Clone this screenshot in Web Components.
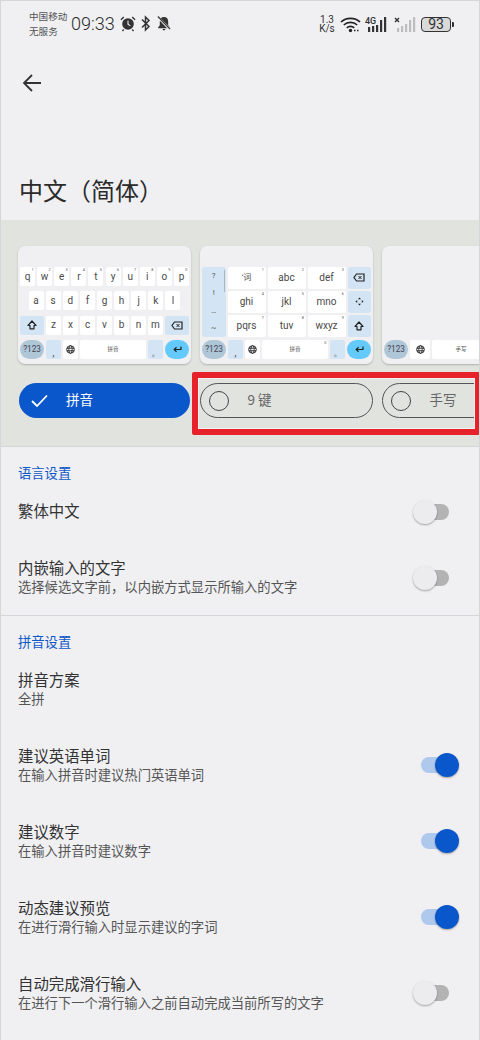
<!DOCTYPE html>
<html lang="zh"><head><meta charset="utf-8"><title>中文（简体）</title>
<style>
html,body{margin:0;padding:0;background:#f0f0f3}
body{width:480px;height:1040px;overflow:hidden;font-family:"Noto Sans CJK SC","Noto Sans",sans-serif;color:#333}
</style></head><body>
<settings-page>
  <status-bar></status-bar>
  <app-header>中文（简体）</app-header>
  <layout-banner></layout-banner>
  <group-title>语言设置</group-title>
  <setting-row h="57" label="繁体中文" toggle="off"></setting-row>
  <setting-row h="75" label="内嵌输入的文字" sub="选择候选文字前，以内嵌方式显示所输入的文字" toggle="off"></setting-row>
  <div style="height:1px;background:#d6d6da"></div>
  <group-title>拼音设置</group-title>
  <setting-row h="75" label="拼音方案" sub="全拼"></setting-row>
  <setting-row h="76" label="建议英语单词" sub="在输入拼音时建议热门英语单词" toggle="on"></setting-row>
  <setting-row h="76" label="建议数字" sub="在输入拼音时建议数字" toggle="on"></setting-row>
  <setting-row h="76" label="动态建议预览" sub="在进行滑行输入时显示建议的字词" toggle="on"></setting-row>
  <setting-row h="76" label="自动完成滑行输入" sub="在进行下一个滑行输入之前自动完成当前所写的文字" toggle="off"></setting-row>
</settings-page>
<script>
function def(name, css, html, init){
  customElements.define(name, class extends HTMLElement{
    connectedCallback(){
      if(this.shadowRoot) return;
      const r=this.attachShadow({mode:'open'});
      r.innerHTML='<style>'+css+'</style>'+(typeof html==='function'?html(this):html);
      if(init) init(this,r);
    }
  });
}
def('settings-page',
 ':host{display:block;position:relative;width:480px;height:1040px;overflow:hidden}:host::after{content:"";position:absolute;inset:0;border:1px solid #d6d6d8;border-bottom:0;pointer-events:none}',
 '<slot></slot>');

def('status-bar',
 `:host{display:flex;height:46px;box-sizing:border-box;align-items:flex-start;color:#333;font-family:Roboto,"Noto Sans CJK SC",sans-serif}
  .carrier{margin:9px 0 0 29px;width:42px;font:9.600px/15px "Noto Sans CJK SC",sans-serif;color:#555;white-space:nowrap}
  .time{font:300 18px/24px Roboto,sans-serif;margin:12px 0 0 0;width:48px;color:#2c2c2c}
  svg{display:block;flex:none}
  .ic{display:flex;margin:15px 0 0 1px}
  .right{margin-left:auto;display:flex;align-items:center;height:24px;margin-top:12px;margin-right:26px}
  .sp{font:10px/9px Roboto,sans-serif;text-align:center;width:16px;color:#333;margin-right:5px}
  .bat{box-sizing:border-box;width:30px;height:15px;border:1.300px solid #333;border-radius:4px;font:14px/13px Roboto,sans-serif;text-align:center;background:#d9d9da;color:#333}
  .nub{width:2px;height:5px;background:#333;border-radius:0 1px 1px 0;margin-left:1px}`,
 `<div class="carrier">中国移动<br>无服务</div><div class="time">09:33</div>
  <div class="ic">
   <svg width="16" height="17" viewBox="0 0 17 17"><circle cx="8.500" cy="9" r="6.200" fill="#333"/><path d="M8.500 5.500V9.300L11 11" stroke="#f0f0f3" stroke-width="1.200" fill="none"/><path d="M1 4.500 4 1.600M16 4.500 13 1.600M4 15l-1.400 1.400M13 15l1.400 1.400" stroke="#333" stroke-width="1.500"/></svg>
   <svg width="11" height="17" viewBox="0 0 11 17" style="margin-left:4px"><path d="M2 4.500 9 11.500 5.500 15V2L9 5.500 2 12.500" stroke="#333" stroke-width="1.500" fill="none"/></svg>
   <svg width="14" height="17" viewBox="0 0 15 17" style="margin-left:6px"><path d="M7.500 1.500c-3 0-4.500 2.200-4.500 5v4L1.300 12.500V13.500H13.700V12.500L12 10.500v-4c0-2.800-1.500-5-4.500-5z" fill="#333"/><path d="M6 14.500h3a1.500 1.500 0 0 1-3 0z" fill="#333"/><path d="M1 1.500 14 15" stroke="#f0f0f3" stroke-width="2.600"/><path d="M1 1 14 14.500" stroke="#333" stroke-width="1.300"/></svg>
  </div>
  <div class="right">
   <div class="sp">1.3<br>K/s</div>
   <svg width="21" height="17" viewBox="0 0 21 17" style="margin-right:4px"><g fill="none" stroke="#222" stroke-width="1.700"><path d="M1 6C6 1.200 15 1.200 20 6"/><path d="M3.800 9C7.500 5.500 13.500 5.500 17.200 9"/><path d="M6.800 11.800C8.800 10 12.200 10 14.200 11.800"/></g><circle cx="10.500" cy="14.500" r="1.700" fill="#222"/><path d="M14 14.500h1.500M17 14.500h1.500" stroke="#222" stroke-width="1.500"/></svg>
   <svg width="24" height="17" viewBox="0 0 24 17" style="margin-right:5px"><text x="0" y="7.500" font-family="Roboto" font-size="9" font-weight="500" fill="#333">4G</text><g fill="#333"><rect x="3" y="11" width="2.200" height="5"/><rect x="7" y="10" width="2.200" height="6"/><rect x="11" y="9" width="2.200" height="7"/><rect x="15" y="4" width="2.200" height="12"/><rect x="19" y="1" width="2.200" height="15"/></g></svg>
   <svg width="22" height="17" viewBox="0 0 22 17" style="margin-right:5px"><path d="M1 2 5 6M5 2 1 6" stroke="#333" stroke-width="1.400"/><g fill="#bdbdbd"><rect x="3" y="12" width="2.200" height="4"/><rect x="7" y="10" width="2.200" height="6"/><rect x="11" y="8" width="2.200" height="8"/><rect x="15" y="4" width="2.200" height="12"/><rect x="19" y="1" width="2.200" height="15"/></g></svg>
   <div class="bat">93</div><div class="nub"></div>
  </div>`);

def('app-header',
 `:host{display:block}
  .bar{height:74px;display:flex;align-items:center;padding-left:22px}
  .t{height:100px;box-sizing:border-box;display:flex;align-items:flex-end;padding:0 0 13px 19px}
  h1{margin:0;font:400 24px/34px "Noto Sans CJK SC",sans-serif;color:#2b2b2b}
  svg{display:block}`,
 `<div class="bar"><svg width="20" height="20" viewBox="0 0 20 20"><path d="M19 10H2M10 2 2 10l8 8" fill="none" stroke="#333" stroke-width="1.800"/></svg></div>
  <div class="t"><h1><slot></slot></h1></div>`);

def('key-cap',
 `:host{display:flex;position:relative;align-items:center;justify-content:center;box-sizing:border-box;height:100%;min-width:0;flex:var(--f,1 1 0);background:var(--bg,#fff);border-radius:var(--rad,2px);font:10px/1 Roboto,"Noto Sans CJK SC",sans-serif;color:#4a4a4a;overflow:hidden}
  sup{position:absolute;top:0.500px;right:1.500px;font-size:3.800px;line-height:4px;color:#555}
  svg{display:block}`,
 h=>{const s=h.getAttribute('s');return '<slot></slot>'+(s?'<sup>'+s+'</sup>':'');});

const ICONS={
 shift:'<svg width="10" height="10" viewBox="0 0 10 10"><path d="M5 1 9 5.500H7V8.800H3V5.500H1z" fill="none" stroke="#222" stroke-width="1.200" stroke-linejoin="round"/></svg>',
 del:'<svg width="12" height="9" viewBox="0 0 12 9"><path d="M3.500 1H11V8H3.500L1 4.500z" fill="none" stroke="#222" stroke-width="1.200"/><path d="M5.500 3 8.500 6M8.500 3 5.500 6" stroke="#222"/></svg>',
 globe:'<svg width="9" height="9" viewBox="0 0 9 9" fill="none" stroke="#222" stroke-width=".9"><circle cx="4.500" cy="4.500" r="3.800"/><ellipse cx="4.500" cy="4.500" rx="1.700" ry="3.800"/><path d="M.7 3.200h7.600M.7 5.800h7.600"/></svg>',
 enter:'<svg width="9" height="7" viewBox="0 0 9 7"><path d="M8 .5V3.500H1.500M3.500 1.300 1.200 3.500 3.500 5.700" fill="none" stroke="#222" stroke-width="1.200"/></svg>',
 move:'<svg width="9" height="9" viewBox="0 0 9 9" fill="#222"><path d="M4.500 .5 6 2.200H3zM4.500 8.500 6 6.800H3zM.5 4.500 2.200 3V6zM8.500 4.500 6.800 3V6z"/></svg>'
};
const BLUE='--bg:#d3e5f4;';
const NUM='--bg:#afc6d6;--rad:10px;--f:0 0 24px;color:#445;font-size:8.200px';
function k(label,o){o=o||{};
  return '<key-cap '+(o.s?'s="'+o.s+'" ':'')+'style="'+(o.st||'')+'">'+label+'</key-cap>';}
function bottom(spS){
  return '<div class="row">'+
   k('?123',{st:NUM})+comma(15)+globe(15)+
   k('<span style="font-size:5.500px;color:#555">拼音</span>',{s:spS,st:'--f:1 1 0'})+
   stop(15)+
   k(ICONS.enter,{st:'--bg:#64c9fb;--rad:10px;--f:0 0 24px'})+'</div>';
}
function comma(w){return k('<span style="align-self:flex-end;padding-bottom:1px">,</span>',{st:BLUE+'--f:0 0 '+w+'px'});}
function stop(w){return k('<span style="align-self:flex-end;font-size:7px;padding-bottom:1px">。</span>',{st:BLUE+'--f:0 0 '+w+'px'});}
function globe(w){return k(ICONS.globe,{st:'--f:0 0 '+w+'px'});}

function qwerty(){
  const r1='qwertyuiop'.split('').map((c,i)=>k(c,{s:String((i+1)%10)})).join('');
  const r2='asdfghjkl'.split('').map(c=>k(c)).join('');
  const r3='zxcvbnm'.split('').map(c=>k(c)).join('');
  return '<div class="row">'+r1+'</div><div class="row" style="padding:0 8.600px">'+r2+'</div>'+
   '<div class="row">'+k(ICONS.shift,{st:BLUE+'--f:0 0 24px'})+r3+k(ICONS.del,{st:BLUE+'--f:0 0 24px'})+'</div>'+
   bottom();
}
function nine(){
  const t=(a,b)=>k(a,{s:b});
  const side=i=>k(i,{st:BLUE+'--f:0 0 23.500px'});
  return '<div class="nine"><div class="col">'+
     ['?','!','…','~'].map(c=>'<span>'+c+'</span>').join('')+'<i></i></div>'+
    '<div class="g">'+
     '<div class="r3">'+t('<span style="font-size:8px">‘词</span>','1')+t('abc','2')+t('def','3')+side(ICONS.del)+'</div>'+
     '<div class="r3">'+t('ghi','4')+t('jkl','5')+t('mno','6')+side(ICONS.move)+'</div>'+
     '<div class="r3">'+t('pqrs','7')+t('tuv','8')+t('wxyz','9')+side(ICONS.shift)+'</div>'+
    '</div></div>'+
   bottom('0');
}
function hand(){
  return '<div style="flex:1"></div><div class="row" style="width:106px">'+
   k('?123',{st:NUM})+
   k(ICONS.globe,{st:'--f:0 0 20px'})+
   k('<span style="font-size:5.500px;color:#555">手写</span>',{st:'--f:1 1 0'})+'</div>';
}
def('kb-preview',
 `:host{display:flex;flex:0 0 173px;height:118px;box-sizing:border-box;flex-direction:column;gap:5.300px;padding:21px 2px 5px;background:#f0f0f3;border-radius:7px;box-shadow:0 1px 2px rgba(0,0,0,.22)}
  :host([type=hand]){gap:0}
  .row{display:flex;gap:2.100px;height:19px;flex:none}
  .nine{display:flex;gap:2px;height:70px;flex:none;margin-bottom:-2.300px}
  .col{position:relative;flex:0 0 23.500px;background:#d3e5f4;border-radius:2px;display:flex;flex-direction:column;justify-content:space-around;align-items:center;font:8px/1 Roboto,sans-serif;color:#555}
  .col i{position:absolute;right:1px;top:3px;width:1px;height:22px;background:#a9b6c0}
  .g{flex:1;display:flex;flex-direction:column;gap:2.400px}
  .r3{flex:1;display:flex;gap:2px}`,
 h=>{const t=h.getAttribute('type');return t==='q'?qwerty():t==='nine'?nine():hand();});

def('layout-chip',
 `:host{display:flex;flex:0 0 173px;box-sizing:border-box;height:35px;border-radius:18px;align-items:center;border:1.500px solid #555;color:#666;font:13.500px/1 "Noto Sans CJK SC",Roboto,sans-serif;white-space:nowrap}
  :host([sel]){background:#0a57cc;border:0;color:#fff;flex-basis:171px;margin:0 1px}
  .c{box-sizing:border-box;width:20px;height:20px;border:1.300px solid #444;border-radius:50%;margin:0 0 0 7.500px}
  svg{display:block;margin-left:12px}
  .l{margin-left:19px;padding-bottom:1px}
  :host([sel]) .l{margin-left:18px;color:#fff}`,
 h=>(h.hasAttribute('sel')?'<svg width="17" height="13" viewBox="0 0 17 13"><path d="M1 7l5 5L16 1.500" fill="none" stroke="#fff" stroke-width="1.800"/></svg>':'<div class="c"></div>')+'<span class="l"><slot></slot></span>');

def('layout-banner',
 `:host{display:block;position:relative;height:227px;box-sizing:border-box;background:#e1e3df;border-bottom:1px solid #d6d6da;overflow:hidden}
  .rows{display:flex;flex-direction:column;width:800px;padding:26px 0 0 18px}
  .line{display:flex;gap:9px}
  .chips{margin-top:19px}
  .mark{position:absolute;left:192px;top:152px;width:288px;height:63px;box-sizing:border-box;border:6.500px solid #e8222b;border-right-width:5px;border-radius:2px;box-shadow:inset 0 0 0 1px #f2f2f2}`,
 `<div class="rows"><div class="line">
    <kb-preview type="q"></kb-preview><kb-preview type="nine"></kb-preview><kb-preview type="hand"></kb-preview>
  </div>
  <div class="line chips">
    <layout-chip sel>拼音</layout-chip><layout-chip>9 键</layout-chip><layout-chip>手写</layout-chip>
  </div></div><div class="mark"></div>`);

def('group-title',
 `:host{display:block;padding:17px 0 1px 18px;font:13.300px/18px "Noto Sans CJK SC",sans-serif;color:#0d57c6}`,
 '<slot></slot>');

def('toggle-switch',
 `:host{display:block;position:relative;width:40px;height:24px;flex:none}
  .track{position:absolute;top:4px;height:16px;border-radius:8px}
  .thumb{position:absolute;top:0;width:24px;height:24px;border-radius:50%;box-shadow:0 1px 2px rgba(0,0,0,.32)}
  :host([state=off]) .track{left:7px;width:29px;background:#b3b3b3}
  :host([state=off]) .thumb{left:0;background:#ececee}
  :host([state=on]) .track{left:4px;width:28px;background:#aec9ec}
  :host([state=on]) .thumb{left:18px;background:#0a57cc}`,
 '<div class="track"></div><div class="thumb"></div>');

def('setting-row',
 `:host{display:flex;align-items:center;box-sizing:border-box;padding:0 18px;justify-content:space-between}
  .w{margin-top:-1px}
  .w.one{margin-top:-3px}
  .t{font:15.400px/20px "Noto Sans CJK SC",sans-serif;color:#333;white-space:nowrap}
  .s{font:13.300px/20px "Noto Sans CJK SC",sans-serif;color:#555;white-space:nowrap}`,
 h=>{const sub=h.getAttribute('sub'),tg=h.getAttribute('toggle');
   h.style.height=h.getAttribute('h')+'px';
   return '<div class="w'+(sub?'':' one')+'"><div class="t">'+h.getAttribute('label')+'</div>'+(sub?'<div class="s">'+sub+'</div>':'')+'</div>'+
    (tg?'<toggle-switch state="'+tg+'" style="margin-right:'+(tg==='on'?'5px':'9px')+'"></toggle-switch>':'');});
</script>
</body></html>
